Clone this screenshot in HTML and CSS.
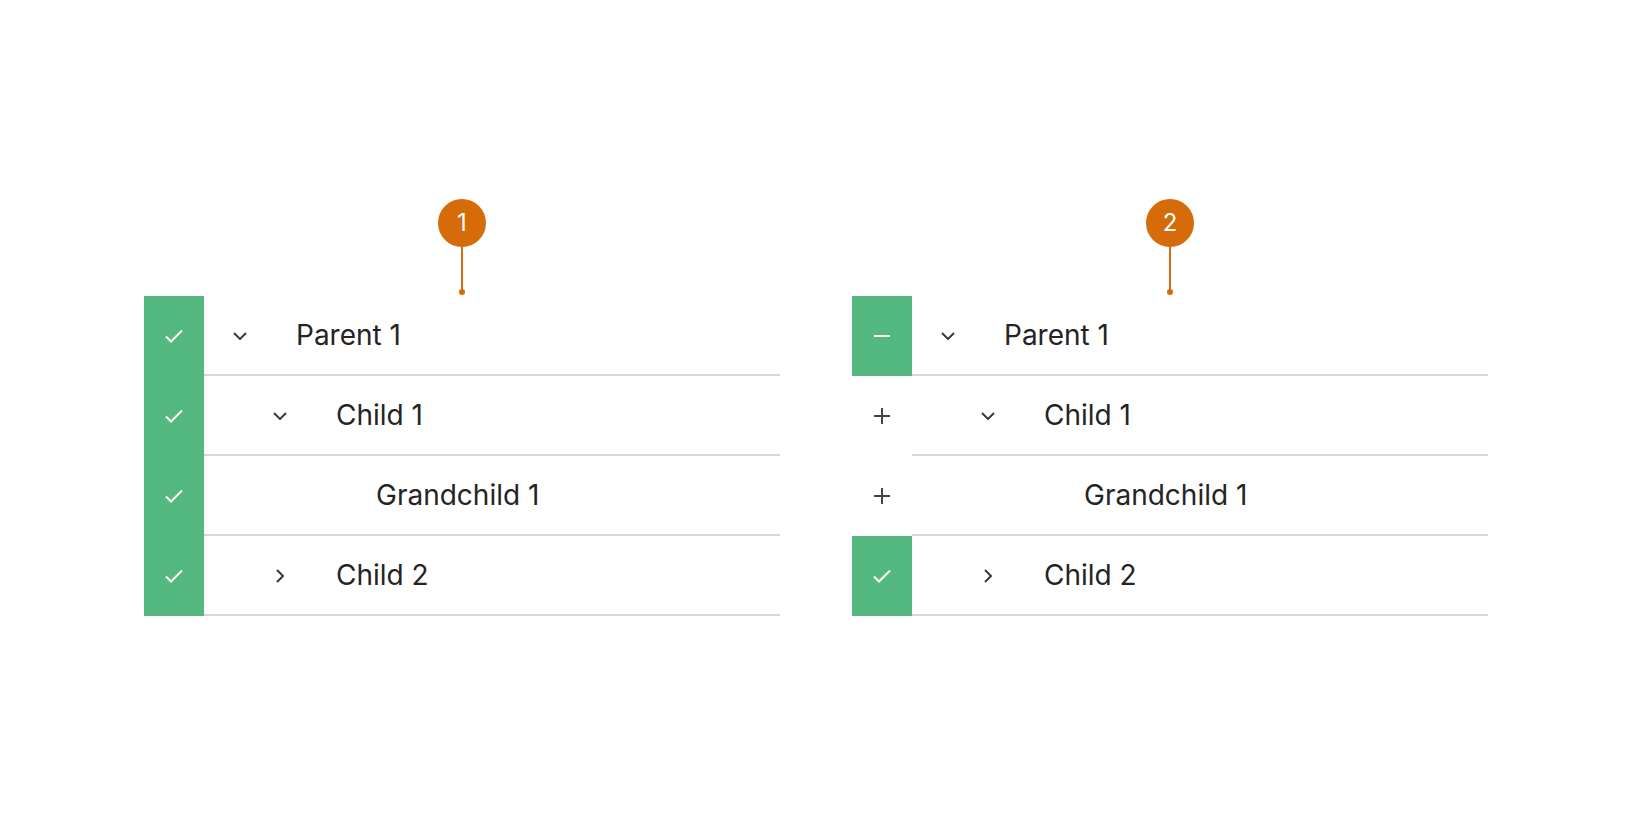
FILE: index.html
```html
<!DOCTYPE html>
<html>
<head>
<meta charset="utf-8">
<link rel="stylesheet" href="styles.css">
</head>
<body>
<div class="stage">
  <section class="panel">
    <div class="callout">
      <div class="badge">1</div>
      <div class="stem"></div>
      <div class="dot"></div>
    </div>
    <div class="tree">
      <div class="row">
        <div class="box on"><svg width="18" height="14" viewBox="0 0 18 14"><polyline points="1,7.5 6,12.5 17,1.5" fill="none" stroke="#fff" stroke-width="2"/></svg></div>
        <div class="cell l0"><span class="chev"><svg width="14" height="8" viewBox="0 0 14 8"><polyline points="1,1 7,7 13,1" fill="none" stroke="#3b3b3b" stroke-width="2"/></svg></span><span class="label">Parent 1</span></div>
      </div>
      <div class="row">
        <div class="box on"><svg width="18" height="14" viewBox="0 0 18 14"><polyline points="1,7.5 6,12.5 17,1.5" fill="none" stroke="#fff" stroke-width="2"/></svg></div>
        <div class="cell l1"><span class="chev"><svg width="14" height="8" viewBox="0 0 14 8"><polyline points="1,1 7,7 13,1" fill="none" stroke="#3b3b3b" stroke-width="2"/></svg></span><span class="label">Child 1</span></div>
      </div>
      <div class="row">
        <div class="box on"><svg width="18" height="14" viewBox="0 0 18 14"><polyline points="1,7.5 6,12.5 17,1.5" fill="none" stroke="#fff" stroke-width="2"/></svg></div>
        <div class="cell l2"><span class="chev"></span><span class="label">Grandchild 1</span></div>
      </div>
      <div class="row">
        <div class="box on"><svg width="18" height="14" viewBox="0 0 18 14"><polyline points="1,7.5 6,12.5 17,1.5" fill="none" stroke="#fff" stroke-width="2"/></svg></div>
        <div class="cell l1"><span class="chev"><svg width="8" height="14" viewBox="0 0 8 14"><polyline points="1,1 7,7 1,13" fill="none" stroke="#3b3b3b" stroke-width="2"/></svg></span><span class="label">Child 2</span></div>
      </div>
    </div>
  </section>

  <section class="panel">
    <div class="callout">
      <div class="badge">2</div>
      <div class="stem"></div>
      <div class="dot"></div>
    </div>
    <div class="tree">
      <div class="row">
        <div class="box on"><svg width="16" height="2" viewBox="0 0 16 2"><line x1="0" y1="1" x2="16" y2="1" stroke="#fff" stroke-width="2"/></svg></div>
        <div class="cell l0"><span class="chev"><svg width="14" height="8" viewBox="0 0 14 8"><polyline points="1,1 7,7 13,1" fill="none" stroke="#3b3b3b" stroke-width="2"/></svg></span><span class="label">Parent 1</span></div>
      </div>
      <div class="row">
        <div class="box"><svg width="16" height="16" viewBox="0 0 16 16"><path d="M0 8H16M8 0V16" stroke="#444" stroke-width="2"/></svg></div>
        <div class="cell l1"><span class="chev"><svg width="14" height="8" viewBox="0 0 14 8"><polyline points="1,1 7,7 13,1" fill="none" stroke="#3b3b3b" stroke-width="2"/></svg></span><span class="label">Child 1</span></div>
      </div>
      <div class="row">
        <div class="box"><svg width="16" height="16" viewBox="0 0 16 16"><path d="M0 8H16M8 0V16" stroke="#444" stroke-width="2"/></svg></div>
        <div class="cell l2"><span class="chev"></span><span class="label">Grandchild 1</span></div>
      </div>
      <div class="row">
        <div class="box on"><svg width="18" height="14" viewBox="0 0 18 14"><polyline points="1,7.5 6,12.5 17,1.5" fill="none" stroke="#fff" stroke-width="2"/></svg></div>
        <div class="cell l1"><span class="chev"><svg width="8" height="14" viewBox="0 0 8 14"><polyline points="1,1 7,7 1,13" fill="none" stroke="#3b3b3b" stroke-width="2"/></svg></span><span class="label">Child 2</span></div>
      </div>
    </div>
  </section>
</div>
</body>
</html>
```

FILE: styles.css
```css
html, body {
  margin: 0;
  padding: 0;
  background: #ffffff;
}

body {
  font-family: Inter, "Noto Sans", "Liberation Sans", sans-serif;
  color: #222222;
}

.stage {
  display: flex;
  justify-content: center;
  gap: 72px;
  padding-top: 199px;
}

.panel {
  width: 636px;
  display: flex;
  flex-direction: column;
  align-items: stretch;
}

.callout {
  display: flex;
  flex-direction: column;
  align-items: center;
}

.badge {
  width: 48px;
  height: 48px;
  border-radius: 50%;
  background: #d56b09;
  color: #ffffff;
  font-size: 24px;
  font-weight: 400;
  line-height: 48px;
  text-align: center;
}

.stem {
  width: 2px;
  height: 45px;
  background: #d56b09;
}

.dot {
  width: 6px;
  height: 6px;
  margin-top: -3px;
  border-radius: 50%;
  background: #d56b09;
}

.tree {
  display: flex;
  flex-direction: column;
  margin-top: 1px;
}

.row {
  display: flex;
  height: 80px;
}

.box {
  width: 60px;
  flex: none;
  display: flex;
  align-items: center;
  justify-content: center;
  background: #ffffff;
}

.box.on {
  background: #53b97f;
}

.box svg {
  display: block;
}

.cell {
  flex: 1;
  display: flex;
  align-items: center;
  border-bottom: 2px solid #d7d7d7;
  box-sizing: border-box;
}

.cell.l0 { padding-left: 24px; }
.cell.l1 { padding-left: 64px; }
.cell.l2 { padding-left: 104px; }

.chev {
  width: 24px;
  height: 24px;
  flex: none;
  display: flex;
  align-items: center;
  justify-content: center;
  margin-top: 2px;
}

.chev svg {
  display: block;
}

.label {
  margin-left: 44px;
  font-size: 28px;
  line-height: 1;
  color: #242424;
  letter-spacing: 0;
}
```
